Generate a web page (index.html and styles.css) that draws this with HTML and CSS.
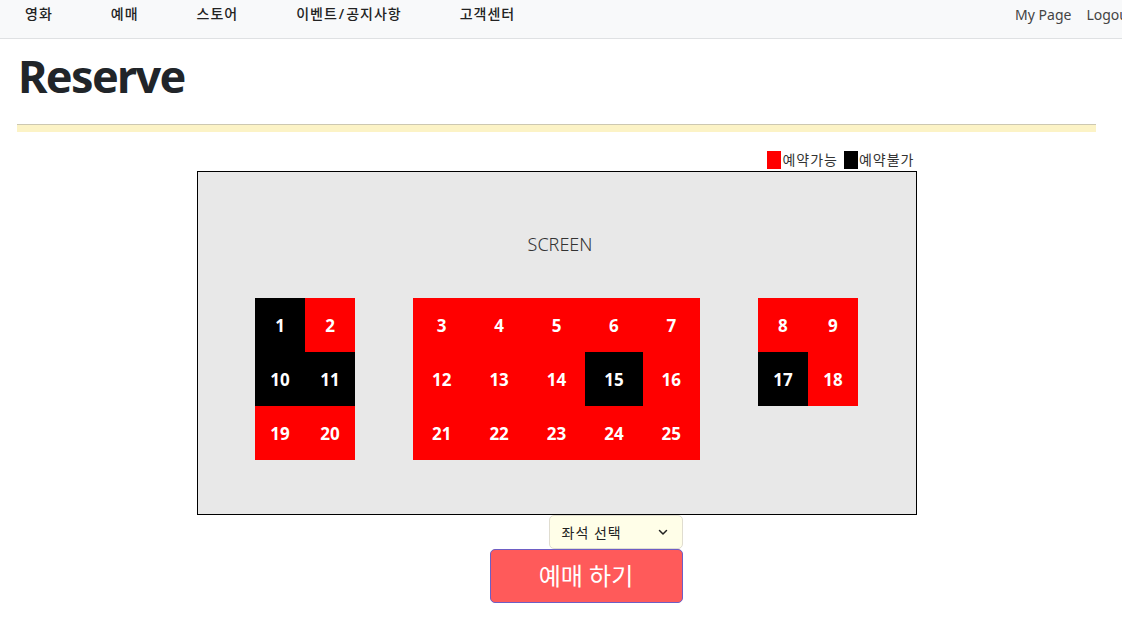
FILE: index.html
```html
<!DOCTYPE html>
<html lang="ko">
<head>
<meta charset="utf-8">
<title>Reserve</title>
<link rel="stylesheet" href="styles.css">
</head>
<body>
<nav class="topnav">
  <ul class="menu">
    <li>영화</li>
    <li>예매</li>
    <li>스토어</li>
    <li>이벤트<span class="slash">/</span>공지사항</li>
    <li>고객센터</li>
  </ul>
  <ul class="account">
    <li>My Page</li>
    <li>Logout</li>
  </ul>
</nav>
<main class="page">
  <h1 class="title">Reserve</h1>
  <div class="divider"></div>
  <section class="hall">
    <div class="legend">
      <span class="swatch swatch-on"></span><span class="legend-text">예약가능</span>
      <span class="swatch swatch-off"></span><span class="legend-text">예약불가</span>
    </div>
    <div class="room">
      <div class="screen">SCREEN</div>
      <div class="blocks">
        <div class="block block-2">
          <div class="seat off">1</div><div class="seat">2</div>
          <div class="seat off">10</div><div class="seat off">11</div>
          <div class="seat">19</div><div class="seat">20</div>
        </div>
        <div class="block block-5">
          <div class="seat">3</div><div class="seat">4</div><div class="seat">5</div><div class="seat">6</div><div class="seat">7</div>
          <div class="seat">12</div><div class="seat">13</div><div class="seat">14</div><div class="seat off">15</div><div class="seat">16</div>
          <div class="seat">21</div><div class="seat">22</div><div class="seat">23</div><div class="seat">24</div><div class="seat">25</div>
        </div>
        <div class="block block-2">
          <div class="seat">8</div><div class="seat">9</div>
          <div class="seat off">17</div><div class="seat">18</div>
        </div>
      </div>
    </div>
    <div class="actions">
      <div class="select">
        <span class="select-label">좌석 선택</span>
        <svg width="12" height="12" viewBox="0 0 12 12" aria-hidden="true"><path d="M2.5 4.5 L6 8 L9.5 4.5" fill="none" stroke="#222" stroke-width="1.5" stroke-linecap="round" stroke-linejoin="round"/></svg>
      </div>
      <button class="reserve-btn" type="button">예매 하기</button>
    </div>
  </section>
</main>
</body>
</html>
```
FILE: styles.css
```css
* { box-sizing: border-box; }
html, body { margin: 0; padding: 0; }
body {
  font-family: "Noto Sans", "Noto Sans CJK KR", sans-serif;
  color: #212529;
  background: #fff;
  width: 1122px;
  overflow: hidden;
}
.topnav {
  display: flex;
  justify-content: space-between;
  height: 39px;
  background: #f8f9fa;
  border-bottom: 1px solid #dfe1e3;
  white-space: nowrap;
}
.menu, .account {
  list-style: none;
  margin: 0;
  padding: 0;
  display: flex;
}
.menu {
  padding: 4px 0 0 25px;
  gap: 58px;
  font-size: 14px;
  font-weight: 500;
  line-height: 20px;
  letter-spacing: 1px;
  color: #222;
}
.slash { margin: 0 1px; }
.account {
  padding: 5px 0 0 0;
  gap: 15px;
  font-size: 14px;
  line-height: 20px;
  color: #444;
  margin-right: -11px;
}
.page {
  padding: 0 26px 0 17px;
}
.title {
  margin: 0;
  padding: 9px 0 0 1px;
  font-size: 45px;
  font-weight: 700;
  line-height: 56px;
  letter-spacing: -1.7px;
  color: #212529;
}
.divider {
  margin-top: 20px;
  height: 8px;
  background: #fcf3c6;
  border-top: 1px solid #cdc8b1;
}
.hall {
  width: 720px;
  margin: 18px auto 0;
}
.legend {
  display: flex;
  justify-content: flex-end;
  align-items: center;
  height: 19px;
  padding-right: 2px;
  font-size: 14px;
  line-height: 18px;
  color: #333;
}
.swatch {
  display: inline-block;
  width: 14px;
  height: 18px;
}
.swatch-on { background: #ff0000; }
.swatch-off { background: #000; margin-left: 6px; }
.legend-text { padding-left: 1px; letter-spacing: 1px; }
.room {
  margin-top: 2px;
  height: 344px;
  border: 1px solid #000;
  background: #e8e8e8;
  padding-top: 60px;
}
.screen {
  text-align: center;
  padding-left: 7px;
  font-size: 18px;
  font-weight: 300;
  line-height: 24px;
  color: #333;
}
.blocks {
  display: flex;
  justify-content: center;
  align-items: flex-start;
  gap: 58px;
  margin-top: 42px;
}
.block {
  display: grid;
  grid-auto-rows: 54px;
}
.block-2 { grid-template-columns: repeat(2, 50px); }
.block-5 { grid-template-columns: repeat(5, 57.4px); }
.seat {
  background: #ff0000;
  color: #fff;
  font-weight: 700;
  font-size: 17px;
  display: flex;
  align-items: center;
  justify-content: center;
}
.seat.off { background: #000; }
.actions {
  display: flex;
  flex-direction: column;
  align-items: flex-end;
  width: 193px;
  margin-left: 293px;
}
.select {
  display: flex;
  align-items: center;
  justify-content: space-between;
  width: 134px;
  height: 34px;
  padding: 0 13px 0 12px;
  background: #fffee8;
  border: 1px solid #e0ddd0;
  border-radius: 5px;
  font-size: 14px;
  color: #222;
}
.select-label { letter-spacing: 1px; }
.reserve-btn {
  width: 193px;
  height: 54px;
  background: #ff5a5a;
  border: 1px solid #6e5ec4;
  border-radius: 5px;
  color: #fff;
  font-family: "Noto Sans", "Noto Sans CJK KR", sans-serif;
  font-size: 24px;
  line-height: 30px;
  padding: 0;
}
```
